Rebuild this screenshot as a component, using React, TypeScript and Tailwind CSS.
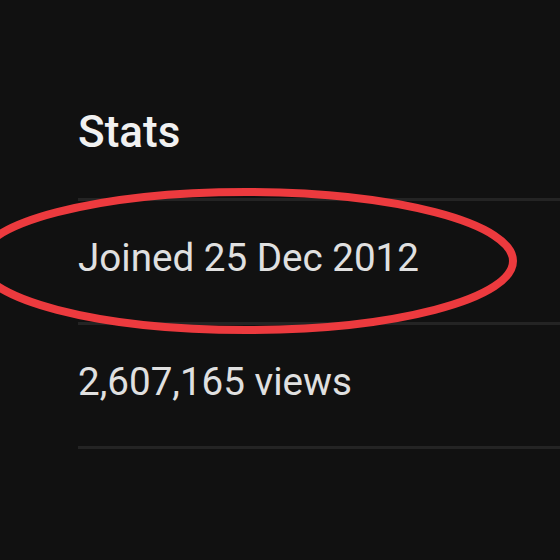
const rows = ["Joined 25 Dec 2012", "2,607,165 views"];

export default function App() {
  return (
    <div className="relative h-[560px] w-[560px] overflow-hidden bg-[#111111] font-['Roboto','Liberation_Sans',sans-serif]">
      <div className="pl-[78px] pt-[106px]">
        <h2 className="mb-[40px] text-[44px] font-medium leading-[52px] text-[#f1f1f1]">Stats</h2>
        {rows.map((row) => (
          <div key={row} className="border-t-[3px] border-[#242424] pt-[33px] pb-[40px]">
            <p className="text-[38.6px] leading-[48px] text-[#e0e0e0]">{row}</p>
          </div>
        ))}
        <div className="border-t-[3px] border-[#242424]" />
      </div>

      {/* hand-drawn highlight */}
      <svg className="pointer-events-none absolute inset-0" width="560" height="560" viewBox="0 0 560 560">
        <ellipse cx="246" cy="261" rx="267" ry="69" fill="none" stroke="#ec3a3e" strokeWidth="8" />
      </svg>
    </div>
  );
}
